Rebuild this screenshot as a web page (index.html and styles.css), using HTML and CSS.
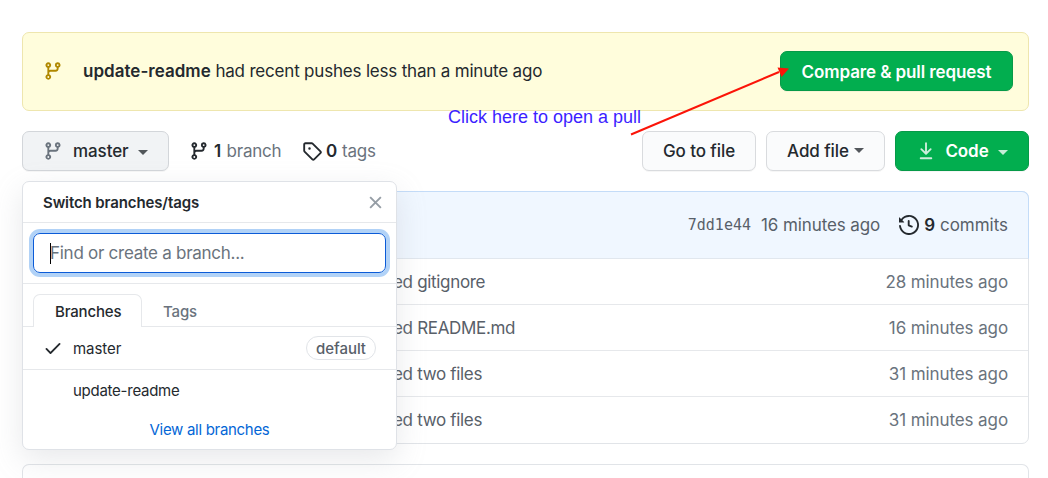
FILE: index.html
```html
<!DOCTYPE html>
<html lang="en">
<head>
<meta charset="utf-8">
<title>Repository</title>
<link rel="stylesheet" href="styles.css">
</head>
<body>
<svg class="defs" width="0" height="0">
  <symbol id="branch" viewBox="0 0 16 16"><path fill-rule="evenodd" d="M11.75 2.5a.75.75 0 100 1.5.75.75 0 000-1.5zm-2.25.75a2.25 2.25 0 113 2.122V6A2.5 2.5 0 0110 8.500H6a1 1 0 00-1 1v1.128a2.251 2.251 0 11-1.500 0V5.372a2.250 2.250 0 111.500 0v1.836A2.492 2.492 0 016 7h4a1 1 0 001-1v-.628A2.250 2.250 0 019.500 3.250zM4.250 12a.75.75 0 100 1.500.75.75 0 000-1.500zM3.500 3.250a.75.75 0 111.500 0 .75.75 0 01-1.500 0z"/></symbol>
</svg>
<main class="page">
  <section class="flash">
    <svg class="icon flash-icon"><use href="#branch"/></svg>
    <p class="flash-text"><strong>update-readme</strong> <span>had recent pushes less than a minute ago</span></p>
    <a class="btn btn-primary compare"><span>Compare &amp; pull request</span></a>
  </section>

  <nav class="toolbar">
    <div class="switcher">
      <button class="btn btn-branch"><svg class="icon muted"><use href="#branch"/></svg><span class="label">master</span><i class="caret"></i></button>
      <div class="menu">
        <header class="menu-head"><span>Switch branches/tags</span>
          <svg class="close" viewBox="0 0 14 14"><path d="M2 2l10 10M12 2L2 12"/></svg>
        </header>
        <div class="menu-filter"><div class="field"><i class="cursor"></i><span>Find or create a branch...</span></div></div>
        <div class="tabs"><span class="tab tab-on"><b>Branches</b></span><span class="tab"><b>Tags</b></span></div>
        <div class="item item-on">
          <svg class="check" viewBox="0 0 16 16"><path d="M13.780 4.220a.75.75 0 010 1.060l-7.250 7.250a.75.75 0 01-1.060 0L2.220 9.280a.75.75 0 011.060-1.060L6 10.940l6.720-6.720a.75.75 0 011.060 0z"/></svg>
          <span class="name">master</span><span class="badge">default</span>
        </div>
        <div class="item"><span class="name">update-readme</span></div>
        <a class="all"><span>View all branches</span></a>
      </div>
    </div>
    <a class="stat branches"><svg class="icon"><use href="#branch"/></svg><strong>1</strong><span>branch</span></a>
    <a class="stat tags"><svg class="icon" viewBox="0 0 16 16"><path fill-rule="evenodd" d="M2.500 7.775V2.750a.25.25 0 01.25-.25h5.025a.25.25 0 01.177.073l6.250 6.250a.25.25 0 010 .354l-5.025 5.025a.25.25 0 01-.354 0l-6.250-6.250a.25.25 0 01-.073-.177zm-1.500 0V2.750C1 1.784 1.784 1 2.750 1h5.025c.464 0 .91.184 1.238.513l6.250 6.250a1.750 1.750 0 010 2.474l-5.026 5.026a1.750 1.750 0 01-2.474 0l-6.250-6.250A1.750 1.750 0 011 7.775zM6 5a1 1 0 100 2 1 1 0 000-2z"/></svg><strong>0</strong><span>tags</span></a>
    <div class="actions">
      <a class="btn goto"><span>Go to file</span></a>
      <button class="btn add"><span>Add file</span><i class="caret"></i></button>
      <button class="btn btn-primary code"><svg class="icon" viewBox="0 0 16 16"><path fill-rule="evenodd" d="M7.470 10.780a.75.75 0 001.060 0l3.750-3.750a.75.75 0 00-1.060-1.060L8.750 8.440V1.750a.75.75 0 00-1.500 0v6.690L4.780 5.970a.75.75 0 00-1.060 1.060l3.750 3.750zM3.750 13a.75.75 0 000 1.500h8.500a.75.75 0 000-1.500h-8.500z"/></svg><span class="label">Code</span><i class="caret"></i></button>
    </div>
  </nav>

  <section class="files">
    <header class="commit">
      <code>7dd1e44</code><span class="when">16 minutes ago</span>
      <svg class="icon" viewBox="0 0 16 16"><path fill-rule="evenodd" d="M1.643 3.143L.427 1.927A.25.25 0 000 2.104V5.750c0 .138.112.25.25.25h3.646a.25.25 0 00.177-.427L2.715 4.215a6.500 6.500 0 11-1.180 4.458.75.75 0 10-1.493.154 8.001 8.001 0 101.600-5.684zM7.750 4a.75.75 0 01.75.75v2.992l2.028.812a.75.75 0 01-.557 1.392l-2.500-1A.75.75 0 017 8.250v-3.500A.75.75 0 017.750 4z"/></svg>
      <strong>9</strong><span class="count">commits</span>
    </header>
    <div class="row"><span class="msg">ed gitignore</span><time>28 minutes ago</time></div>
    <div class="row"><span class="msg">ed README.md</span><time>16 minutes ago</time></div>
    <div class="row"><span class="msg">ed two files</span><time>31 minutes ago</time></div>
    <div class="row"><span class="msg">ed two files</span><time>31 minutes ago</time></div>
  </section>
  <section class="readme"></section>
</main>
<div class="note">Click here to open a pull</div>
<svg class="arrow" viewBox="0 0 170 76"><path class="shaft" d="M6 70.500L154 8"/><path class="head" d="M152.500 3.500L164 4.500L156.500 13z"/></svg>
</body>
</html>
```
FILE: styles.css
```css
* { box-sizing: border-box; }
body { margin: 0; width: 1048px; height: 478px; overflow: hidden; position: relative; background: #fff; color: #24292e; font: 17px/24px Inter, "Noto Sans", sans-serif; white-space: nowrap; }
p { margin: 0; }
button { font: inherit; margin: 0; }
.defs { position: absolute; }
.page { height: 478px; padding: 32px 19px 0 22px; overflow: hidden; }
.icon { width: 20px; height: 20px; fill: currentColor; flex: none; }
strong { font-weight: 600; }

.flash { height: 79px; display: flex; align-items: center; padding: 0 15px 1px 20px; background: #fffddc; border: 1px solid #eee6ae; border-radius: 7px; }
.flash-icon { color: #b08800; }
.flash-text { margin-left: 20px; letter-spacing: -0.19px; }
.flash-text strong { letter-spacing: 0.02px; }
.btn.compare { margin-left: auto; width: 233px; letter-spacing: -0.1px; padding-top: 1px; }

.btn { height: 40px; display: flex; align-items: center; justify-content: center; padding: 0; border: 1px solid #d9dbde; border-radius: 7px; background: #fafbfc; box-shadow: 0 1px 0 rgba(27,31,35,.04); color: #24292e; font-weight: 500; letter-spacing: -0.08px; }
.btn-primary { background: #02ae4f; border-color: #069a48; color: #fff; font-weight: 600; }
.caret { width: 0; height: 0; border: 5px solid transparent; border-top-color: currentColor; border-bottom: 0; opacity: .78; }

.toolbar { display: flex; align-items: center; margin-top: 20px; height: 40px; }
.switcher { position: relative; width: 147px; margin-right: 20px; }
.btn-branch { width: 147px; justify-content: flex-start; padding-left: 20px; background: #f1f3f5; border-color: #d3d6da; }
.muted { color: #6a737d; }
.btn-branch .label { margin-left: 10px; }
.btn-branch .caret { margin: 3px 0 0 9px; }
.stat { display: flex; align-items: center; color: #24292e; letter-spacing: -0.2px; }
.stat span { color: #6a737d; margin-left: 5.5px; }
.stat strong { margin-left: 5px; }
.branches { width: 113px; }
.tags strong { margin-left: 4px; }
.tags span { margin-left: 5px; }
.actions { display: flex; gap: 10px; margin-left: auto; }
.goto { width: 114px; }
.add { width: 119px; }
.add .caret { margin: -2px 0 0 5px; }
.code { width: 134px; }
.code .icon { opacity: .8; }
.code .label { margin-left: 9px; }
.code .caret { margin: 3px 0 0 9px; }

.menu { position: absolute; z-index: 2; left: 0; top: 50px; width: 375px; height: 269px; background: #fff; border: 1px solid #dfe2e7; border-radius: 7px; box-shadow: 0 10px 30px rgba(149,157,165,.22); font-size: 15px; line-height: 20px; }
.menu-head { height: 41px; display: flex; align-items: center; justify-content: space-between; padding: 0 13px 0 20px; border-bottom: 1px solid #e6e8eb; font-weight: 600; letter-spacing: -0.12px; }
.menu-head span { padding-top: 2px; }
.close { width: 15px; height: 15px; fill: none; stroke: #959da5; stroke-width: 1.8; }
.menu-filter { height: 61px; padding: 10px; border-bottom: 1px solid #e6e8eb; }
.field { height: 40px; display: flex; align-items: center; padding-left: 16px; border: 1px solid #0b5bd7; border-radius: 7px; box-shadow: 0 0 0 4px #b1d2f7; color: #6a737d; font-size: 17px; letter-spacing: -0.27px; }
.cursor { width: 1px; height: 21px; background: #000; margin-right: -1px; }
.tabs { height: 43px; display: flex; align-items: flex-end; padding-left: 10px; border-bottom: 1px solid #e6e8eb; letter-spacing: -0.16px; }
.tab { height: 33px; display: flex; align-items: center; padding: 4px 21px 0; color: #6a737d; }
.tab b { font-weight: 500; }
.tab-on { width: 109px; padding: 2px 20px 0 21px; border: 1px solid #e6e8eb; border-bottom: 0; border-radius: 7px 7px 0 0; background: #fff; color: #24292e; margin-bottom: -1px; }
.item { height: 42px; display: flex; align-items: center; padding: 0 20px 0 50px; letter-spacing: -0.26px; }
.item-on { height: 43px; padding-left: 20px; border-bottom: 1px solid #e6e8eb; letter-spacing: -0.05px; }
.item-on .name { padding-top: 2px; }
.check { width: 20px; height: 20px; margin-right: 10px; fill: #24292e; }
.badge { margin-left: auto; width: 70px; height: 24px; display: flex; align-items: center; justify-content: center; padding-top: 1px; border: 1px solid #e1e4e8; border-radius: 12px; color: #586069; font-weight: 500; }
.all { display: flex; justify-content: center; padding-top: 8px; color: #0366d6; letter-spacing: -0.3px; }

.files { margin-top: 20px; height: 253px; border: 1px solid #e1e4e8; border-radius: 7px; color: #586069; letter-spacing: -0.1px; }
.commit { height: 68px; margin: -1px -1px 0; display: flex; align-items: center; justify-content: flex-end; padding-right: 20px; background: #f0f7ff; border: 1px solid #c4dcf8; border-bottom-color: #e1e7ee; border-radius: 7px 7px 0 0; }
.commit code { font: 15px "DejaVu Sans Mono", monospace; letter-spacing: 0; margin-right: 10px; }
.commit .icon { color: #24292e; margin: 0 5px 0 19px; }
.commit strong { color: #24292e; margin-right: 5px; }
.count { letter-spacing: -0.02px; }
.row { height: 46px; display: flex; align-items: center; justify-content: space-between; padding: 0 20px 0 370px; border-bottom: 1px solid #e6e8eb; }
.row:last-child { border-bottom: 0; }
.row time { color: #6a737d; }
.msg { letter-spacing: -0.32px; }
.readme { margin-top: 20px; height: 14px; border: 1px solid #e1e4e8; border-bottom: 0; border-radius: 7px 7px 0 0; }

.note { position: absolute; left: 448px; top: 105px; color: #3c1fff; font: 18px/24px "Liberation Sans", Arial, sans-serif; }
.arrow { position: absolute; left: 625px; top: 64px; width: 170px; height: 76px; }
.shaft { fill: none; stroke: #fb1408; stroke-width: 2; }
.head { fill: #fb1408; }
```
